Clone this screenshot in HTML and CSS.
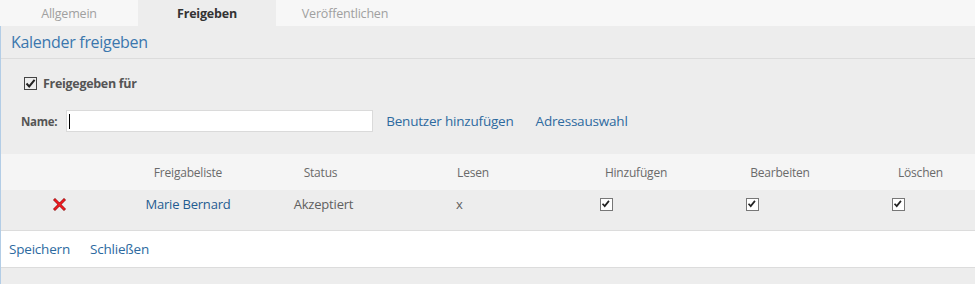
FILE: index.html
```html
<!DOCTYPE html>
<html lang="de">
<head>
<meta charset="utf-8">
<title>Kalender freigeben</title>
<link rel="stylesheet" href="styles.css">
</head>
<body>
<div class="tabs">
  <div class="tab">Allgemein</div>
  <div class="tab active">Freigeben</div>
  <div class="tab">Veröffentlichen</div>
</div>
<div class="content">
  <div class="title-bar">Kalender freigeben</div>
  <div class="share">
    <label class="check-row">
      <span class="cbox strong"><svg viewBox="0 0 13 13" width="13" height="13"><path d="M2.5 6.5 L5.2 9.4 L10.6 2.8" fill="none" stroke="#222" stroke-width="2"/></svg></span>
      <span class="check-label">Freigegeben für</span>
    </label>
    <div class="name-row">
      <span class="name-label">Name:</span>
      <div class="name-input"><span class="caret"></span></div>
      <a class="link" href="#">Benutzer hinzufügen</a>
      <a class="link" href="#">Adressauswahl</a>
    </div>
  </div>
  <div class="table">
    <div class="thead">
      <div class="th"></div>
      <div class="th">Freigabeliste</div>
      <div class="th">Status</div>
      <div class="th">Lesen</div>
      <div class="th">Hinzufügen</div>
      <div class="th">Bearbeiten</div>
      <div class="th">Löschen</div>
    </div>
    <div class="trow">
      <div class="td del"><svg viewBox="0 0 13 13" width="13" height="13"><path d="M2 2 L11 11 M11 2 L2 11" stroke="#8a0a0a" stroke-width="2.8" stroke-linecap="square"/><path d="M2 2 L11 11 M11 2 L2 11" stroke="#ee1c22" stroke-width="1.8" stroke-linecap="square"/></svg></div>
      <div class="td center"><a class="user" href="#">Marie Bernard</a></div>
      <div class="td center status">Akzeptiert</div>
      <div class="td read">x</div>
      <div class="td cb c5"><span class="cbox"><svg viewBox="0 0 13 13" width="11" height="11"><path d="M1.8 5.6 L4.4 8.4 L9.4 2.2" fill="none" stroke="#222" stroke-width="2"/></svg></span></div>
      <div class="td cb c6"><span class="cbox"><svg viewBox="0 0 13 13" width="11" height="11"><path d="M1.8 5.6 L4.4 8.4 L9.4 2.2" fill="none" stroke="#222" stroke-width="2"/></svg></span></div>
      <div class="td cb c7"><span class="cbox"><svg viewBox="0 0 13 13" width="11" height="11"><path d="M1.8 5.6 L4.4 8.4 L9.4 2.2" fill="none" stroke="#222" stroke-width="2"/></svg></span></div>
    </div>
  </div>
  <div class="footer">
    <a class="link" href="#">Speichern</a>
    <a class="link" href="#">Schließen</a>
  </div>
</div>
</body>
</html>
```
FILE: styles.css
```css
* { box-sizing: border-box; }
html, body {
  margin: 0;
  padding: 0;
  height: 100%;
}
body {
  background: #ededed;
  font-family: "Open Sans", "Noto Sans", sans-serif;
  color: #606060;
  overflow: hidden;
}
a { text-decoration: none; }

.tabs {
  display: flex;
  height: 26px;
  background: #f7f7f7;
}
.tab {
  width: 138px;
  display: flex;
  align-items: center;
  justify-content: center;
  font-size: 12.5px;
  color: #a0a0a0;
  letter-spacing: -0.2px;
}
.tab.active {
  background: #ededed;
  color: #333;
  font-weight: 700;
}

.content {
  border-left: 1px solid #b3cde6;
  min-height: calc(100% - 26px);
}
.title-bar {
  height: 33px;
  border-bottom: 1px solid #dcdcdc;
  padding-left: 10px;
  font-size: 16px;
  line-height: 33px;
  color: #3b77ad;
  letter-spacing: -0.3px;
}

.share {
  padding: 18px 0 22px 23px;
}
.check-row {
  display: flex;
  align-items: center;
  gap: 6px;
  height: 13px;
}
.cbox {
  width: 13px;
  height: 13px;
  border: 1px solid #777;
  background: #fff;
  display: inline-flex;
  align-items: center;
  justify-content: center;
  flex: none;
}
.cbox.strong { border-color: #444; background: transparent; }
.cbox.strong svg { margin: -1px; }
.check-label {
  font-size: 12.5px;
  font-weight: 700;
  color: #555;
  letter-spacing: -0.3px;
}

.name-row {
  display: flex;
  align-items: center;
  margin-top: 20px;
  margin-left: -3px;
  height: 22px;
}
.name-label {
  font-size: 11.5px;
  font-weight: 700;
  color: #555;
  letter-spacing: -0.3px;
  margin-right: 9px;
}
.name-input {
  width: 307px;
  height: 22px;
  background: #fff;
  border: 1px solid #dadada;
  display: flex;
  align-items: center;
  padding-left: 2px;
  margin-right: 13px;
}
.caret {
  width: 1px;
  height: 15px;
  background: #000;
}
.link {
  font-size: 13.5px;
  color: #2d6a9f;
  letter-spacing: -0.2px;
}
.name-row .link + .link { margin-left: 22px; }

.table { overflow: hidden; }
.thead, .trow {
  display: grid;
  grid-template-columns: 117px 140px 125px 180px 146px 142px 139px;
  width: 989px;
}
.thead {
  height: 36px;
  background: #f5f5f5;
  align-items: center;
}
.th {
  text-align: center;
  font-size: 12px;
  color: #6a6a6a;
  letter-spacing: -0.2px;
}
.trow {
  height: 41px;
  background: #ededed;
  border-bottom: 1px solid #dcdcdc;
  padding-top: 5px;
  align-items: start;
}
.td {
  height: 18px;
  display: flex;
  align-items: center;
  font-size: 13px;
  color: #606060;
  letter-spacing: -0.2px;
}
.td.center { justify-content: center; }
.td.del { padding-left: 52px; }
.user { color: #1f5c91; font-size: 13px; }
.td.status { padding-left: 6px; }
.td.read { padding-left: 73px; }
.td.c5 { padding-left: 37px; }
.td.c6 { padding-left: 37px; }
.td.c7 { padding-left: 41px; }

.footer {
  height: 37px;
  background: #fff;
  border-bottom: 1px solid #dcdcdc;
  display: flex;
  align-items: center;
  gap: 20px;
  padding-left: 8px;
  padding-bottom: 1px;
}
```
